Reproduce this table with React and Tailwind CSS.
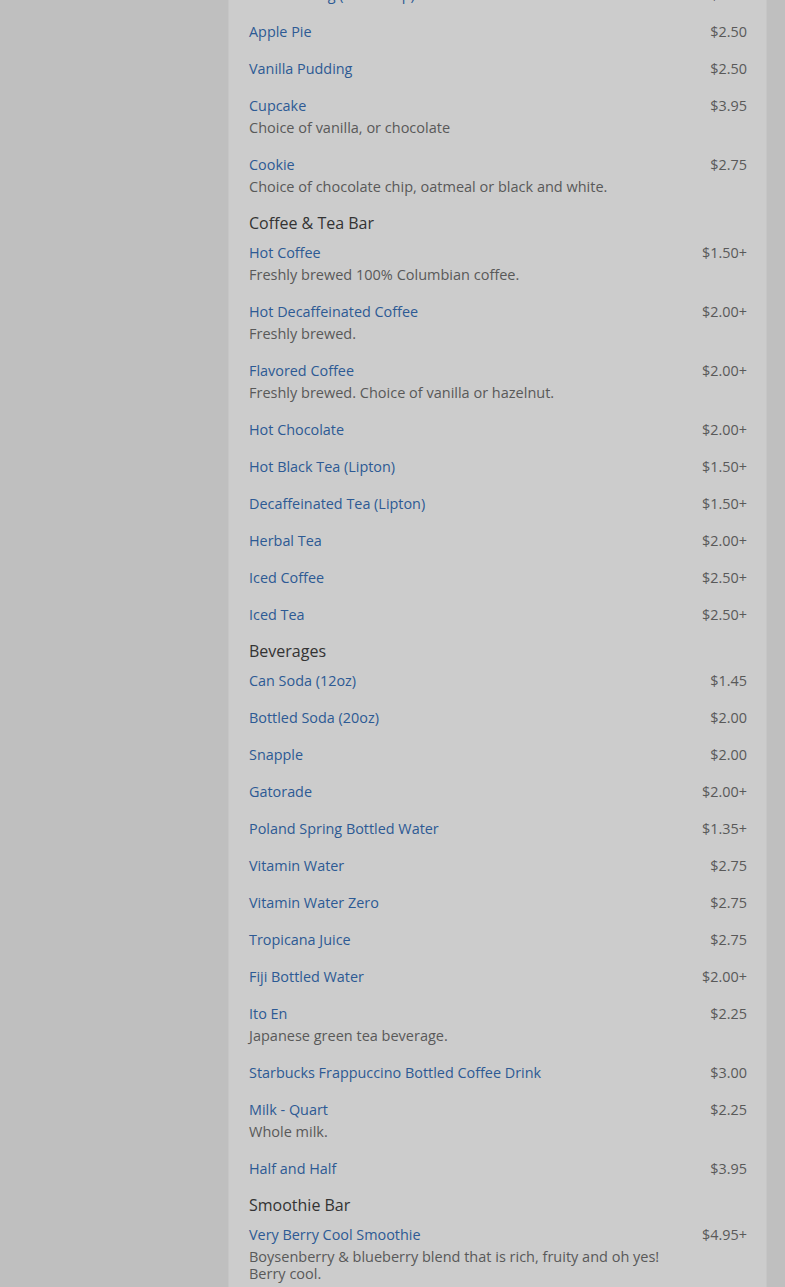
import React from "react";

const sections = [
  {
    title: null,
    items: [
      { name: "Rice Pudding (Small Cup)", price: "$2.50" },
      { name: "Apple Pie", price: "$2.50" },
      { name: "Vanilla Pudding", price: "$2.50" },
      { name: "Cupcake", price: "$3.95", desc: "Choice of vanilla, or chocolate" },
      {
        name: "Cookie",
        price: "$2.75",
        desc: "Choice of chocolate chip, oatmeal or black and white.",
      },
    ],
  },
  {
    title: "Coffee & Tea Bar",
    items: [
      { name: "Hot Coffee", price: "$1.50+", desc: "Freshly brewed 100% Columbian coffee." },
      { name: "Hot Decaffeinated Coffee", price: "$2.00+", desc: "Freshly brewed." },
      {
        name: "Flavored Coffee",
        price: "$2.00+",
        desc: "Freshly brewed. Choice of vanilla or hazelnut.",
      },
      { name: "Hot Chocolate", price: "$2.00+" },
      { name: "Hot Black Tea (Lipton)", price: "$1.50+" },
      { name: "Decaffeinated Tea (Lipton)", price: "$1.50+" },
      { name: "Herbal Tea", price: "$2.00+" },
      { name: "Iced Coffee", price: "$2.50+" },
      { name: "Iced Tea", price: "$2.50+" },
    ],
  },
  {
    title: "Beverages",
    items: [
      { name: "Can Soda (12oz)", price: "$1.45" },
      { name: "Bottled Soda (20oz)", price: "$2.00" },
      { name: "Snapple", price: "$2.00" },
      { name: "Gatorade", price: "$2.00+" },
      { name: "Poland Spring Bottled Water", price: "$1.35+" },
      { name: "Vitamin Water", price: "$2.75" },
      { name: "Vitamin Water Zero", price: "$2.75" },
      { name: "Tropicana Juice", price: "$2.75" },
      { name: "Fiji Bottled Water", price: "$2.00+" },
      { name: "Ito En", price: "$2.25", desc: "Japanese green tea beverage." },
      { name: "Starbucks Frappuccino Bottled Coffee Drink", price: "$3.00" },
      { name: "Milk - Quart", price: "$2.25", desc: "Whole milk." },
      { name: "Half and Half", price: "$3.95" },
    ],
  },
  {
    title: "Smoothie Bar",
    items: [
      {
        name: "Very Berry Cool Smoothie",
        price: "$4.95+",
        desc: "Boysenberry & blueberry blend that is rich, fruity and oh yes! Berry cool.",
      },
    ],
  },
];

const MenuItem = ({ item }) => (
  <div className="flex items-start">
    <div className="flex-1 min-w-0">
      <p className="text-[14.4px] leading-[17px] text-[#2d5a94]">{item.name}</p>
      {item.desc && (
        <p className="mt-[5px] text-[14.5px] leading-[17px] text-[#595959]">
          {item.desc}
        </p>
      )}
    </div>
    <p className="w-[60px] text-right text-[14.4px] leading-[17px] text-[#595959]">
      {item.price}
    </p>
  </div>
);

const App = () => {
  return (
    <div
      className="flex min-h-[1287px] bg-[#bfbfbf]"
      style={{ fontFamily: "'Open Sans', 'Noto Sans', sans-serif" }}
    >
      <div className="w-[228px] shrink-0" />
      <div className="w-[539px] shrink-0 bg-[#cccccc] border-x border-[#c6c6c6] pl-[20px] pr-[19px] pb-[20px] overflow-hidden">
        <div className="-mt-[14px] flex flex-col gap-[20px]">
          {sections.map((section, i) => (
            <div key={i} className="flex flex-col">
              {section.title && (
                <h2 className="mb-[12px] text-[16px] leading-[17px] text-[#333333]">
                  {section.title}
                </h2>
              )}
              <div className="flex flex-col gap-[20px]">
                {section.items.map((item) => (
                  <MenuItem key={item.name} item={item} />
                ))}
              </div>
            </div>
          ))}
        </div>
      </div>
    </div>
  );
};

export default App;
